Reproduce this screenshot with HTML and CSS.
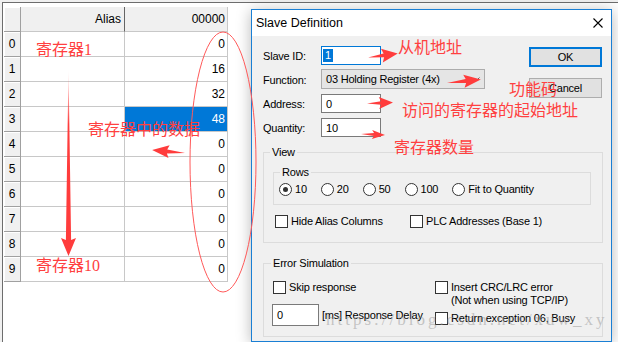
FILE: index.html
```html
<!DOCTYPE html>
<html lang="en">
<head>
    <meta charset="UTF-8">
    <meta name="viewport" content="width=device-width, initial-scale=1.0">
    <title>Modbus Slave - Slave Definition</title>
    <link rel="stylesheet" href="styles.css">
</head>
<body>
    <div class="screen">
        <div class="grid-frame">
            <div class="sheet">
                <div class="corner"></div>
                <div class="col-head alias-head">Alias</div>
                <div class="col-head">00000</div>

                <div class="row-head">0</div><div class="cell"></div><div class="cell value">0</div>
                <div class="row-head">1</div><div class="cell"></div><div class="cell value">16</div>
                <div class="row-head">2</div><div class="cell"></div><div class="cell value">32</div>
                <div class="row-head">3</div><div class="cell"></div><div class="cell value active">48</div>
                <div class="row-head">4</div><div class="cell"></div><div class="cell value">0</div>
                <div class="row-head">5</div><div class="cell"></div><div class="cell value">0</div>
                <div class="row-head">6</div><div class="cell"></div><div class="cell value">0</div>
                <div class="row-head">7</div><div class="cell"></div><div class="cell value">0</div>
                <div class="row-head">8</div><div class="cell"></div><div class="cell value">0</div>
                <div class="row-head">9</div><div class="cell"></div><div class="cell value">0</div>
            </div>
        </div>

        <div class="dialog">
            <div class="titlebar">
                <span>Slave Definition</span>
                <svg class="close" width="10" height="10" viewBox="0 0 10 10">
                    <path d="M0.5 0.5 L9.5 9.5 M9.5 0.5 L0.5 9.5" stroke="#000" stroke-width="1.1" fill="none"/>
                </svg>
            </div>
            <div class="dlg-body">
                <div class="top">
                    <div class="fields">
                        <label>Slave ID:</label>
                        <div class="input focus"><span class="sel-text">1</span></div>
                        <label>Function:</label>
                        <div class="select">
                            <span>03 Holding Register (4x)</span>
                            <svg width="9" height="5" viewBox="0 0 9 5"><path d="M0.5 0.5 L4.5 4.5 L8.5 0.5" stroke="#606060" fill="none"/></svg>
                        </div>
                        <label>Address:</label>
                        <div class="input">0</div>
                        <label>Quantity:</label>
                        <div class="input">10</div>
                    </div>
                    <div class="buttons">
                        <div class="btn default">OK</div>
                        <div class="btn">Cancel</div>
                    </div>
                </div>

                <fieldset class="group view">
                    <legend>View</legend>
                    <fieldset class="group rows">
                        <legend>Rows</legend>
                        <div class="radios">
                            <div class="opt"><span class="radio on"></span>10</div>
                            <div class="opt"><span class="radio"></span>20</div>
                            <div class="opt"><span class="radio"></span>50</div>
                            <div class="opt"><span class="radio"></span>100</div>
                            <div class="opt"><span class="radio"></span>Fit to Quantity</div>
                        </div>
                    </fieldset>
                    <div class="checks">
                        <div class="opt"><span class="box"></span>Hide Alias Columns</div>
                        <div class="opt"><span class="box"></span>PLC Addresses (Base 1)</div>
                    </div>
                </fieldset>

                <fieldset class="group errors">
                    <legend>Error Simulation</legend>
                    <div class="err-grid">
                        <div>
                            <div class="opt"><span class="box"></span>Skip response</div>
                            <div class="delay">
                                <div class="input delay-input">0</div>
                                <span>[ms] Response Delay</span>
                            </div>
                        </div>
                        <div>
                            <div class="opt top-align"><span class="box"></span><span>Insert CRC/LRC error<br>(Not when using TCP/IP)</span></div>
                            <div class="opt busy"><span class="box"></span>Return exception 06, Busy</div>
                        </div>
                    </div>
                </fieldset>
            </div>
        </div>

        <svg class="notes" width="618" height="342" viewBox="0 0 618 342">
            <defs>
                <linearGradient id="fade" x1="0" y1="0" x2="1" y2="0">
                    <stop offset="0" stop-color="#ff3c3c" stop-opacity="0"/>
                    <stop offset="0.3" stop-color="#ff3c3c" stop-opacity="1"/>
                </linearGradient>
            </defs>
            <ellipse cx="223" cy="162" rx="33" ry="130" fill="none" stroke="#ff5a5a" stroke-width="1"/>

            <polygon fill="url(#fade)" transform="translate(68.5,68) rotate(90)" points="0,0 172,-2.6 170,-7.5 188,0 170,7.5 172,2.6"/>
            <polygon class="arrow" transform="translate(185,153) rotate(185)" points="0,0 18,-2 16,-6.5 33,0 16,6.5 18,2"/>
            <polygon class="arrow" transform="translate(368,57.5) rotate(-7.6)" points="0,0 16,-2 14,-7 30,0 14,7 16,2"/>
            <polygon class="arrow" transform="translate(447,83) rotate(-6)" points="0,0 19,-2 17,-6.5 34,0 17,6.5 19,2"/>
            <polygon class="arrow" transform="translate(367,103.5) rotate(-2)" points="0,0 14,-1.8 12,-6 26,0 12,6 14,1.8"/>
            <polygon class="arrow" transform="translate(361,134) rotate(2.4)" points="0,0 13,-1.5 11,-4.5 24,0 11,4.5 13,1.5"/>

            <text class="note" x="36" y="55">寄存器1</text>
            <text class="note" x="36" y="271">寄存器10</text>
            <text class="note" x="88" y="135">寄存器中的数据</text>
            <text class="note" x="398" y="53">从机地址</text>
            <text class="note" x="509" y="95">功能码</text>
            <text class="note" x="402" y="116">访问的寄存器的起始地址</text>
            <text class="note" x="394" y="153">寄存器数量</text>

            <text class="mark" x="326" y="325">https://blog.csdn.net/xuw_xy</text>
        </svg>
    </div>
</body>
</html>
```

FILE: styles.css
```css
* {
    box-sizing: border-box;
}
body {
    margin: 0;
    width: 618px;
    height: 342px;
    overflow: hidden;
    background: #f0f0f0;
    font-family: "Liberation Sans", Arial, sans-serif;
    color: #000;
}
.screen {
    position: relative;
    width: 618px;
    height: 342px;
    padding: 2px 0 0 2px;
}
.grid-frame {
    height: 100%;
    background: #fff;
    border-top: 1px solid #6d6d6d;
    border-left: 1px solid #6d6d6d;
    padding: 4px 0 0 1px;
}

/* register table */
.sheet {
    display: grid;
    grid-template-columns: 17px 104px 103px;
    grid-auto-rows: 25px;
    width: 224px;
    font-size: 12px;
}
.sheet > div {
    display: flex;
    align-items: center;
    border-right: 1px solid #c8c8c8;
    border-bottom: 1px solid #c8c8c8;
}
.corner,
.row-head {
    background: #f0f0f0;
    box-shadow: inset 1px 1px #fff;
}
.sheet > .row-head,
.sheet > .corner {
    border-color: #a0a0a0;
    justify-content: center;
}
.col-head {
    background: #f0f0f0;
    justify-content: flex-end;
    padding-right: 2px;
}
.sheet > .alias-head {
    border-right-color: #646464;
    padding-right: 3px;
}
.value {
    justify-content: flex-end;
    padding-right: 2px;
}
.value.active {
    background: #0078d7;
    color: #fff;
}

/* dialog window */
.dialog {
    position: absolute;
    left: 251px;
    top: 9px;
    width: 361px;
    height: 333px;
    border: 1px solid #1a7fd4;
    background: #f0f0f0;
    box-shadow: 0 2px 14px rgba(0, 0, 0, 0.28);
    display: flex;
    flex-direction: column;
    font-size: 11px;
    letter-spacing: -0.2px;
}
.titlebar {
    height: 26px;
    background: #fff;
    display: flex;
    align-items: center;
    justify-content: space-between;
    padding: 0 8px 1px 4px;
    font-size: 12.5px;
    letter-spacing: 0;
}
.dlg-body {
    flex: 1;
    padding: 10px 8px 0 11px;
}
.top {
    display: flex;
    justify-content: space-between;
    align-items: flex-start;
}
.fields {
    display: grid;
    grid-template-columns: 58px auto;
    grid-auto-rows: 19px;
    row-gap: 5px;
    align-items: center;
}
.input {
    width: 60px;
    height: 19px;
    background: #fff;
    border: 1px solid #7a7a7a;
    padding-left: 4px;
    display: flex;
    align-items: center;
}
.input.focus {
    border-color: #0078d7;
    padding-left: 1px;
}
.sel-text {
    background: #0078d7;
    color: #fff;
    padding: 0 2px;
    line-height: 13px;
}
.select {
    width: 164px;
    height: 20px;
    margin-top: -1px;
    background: #e5e5e5;
    border: 1px solid #acacac;
    padding: 0 4px 0 4px;
    display: flex;
    align-items: center;
    justify-content: space-between;
}
.buttons {
    display: flex;
    flex-direction: column;
    gap: 11px;
    margin: 1px 1px 0 0;
}
.btn {
    width: 73px;
    height: 20px;
    background: #e1e1e1;
    border: 1px solid #adadad;
    display: flex;
    align-items: center;
    justify-content: center;
}
.btn.default {
    border: 2px solid #0078d7;
}

/* group boxes */
.group {
    margin: 0;
    min-width: 0;
    border: 1px solid #dcdcdc;
}
.group legend {
    padding: 0 2px;
    line-height: 14px;
}
.view {
    margin-top: 8px;
    padding: 6px 11px 14px 9px;
}
.view > legend {
    margin-left: -3px;
}
.rows {
    padding: 4px 0 8px 5px;
}
.rows > legend {
    margin-left: 1px;
}
.radios {
    display: flex;
    gap: 14px;
}
.opt {
    display: flex;
    align-items: center;
    gap: 3px;
    line-height: 13px;
}
.radio {
    width: 13px;
    height: 13px;
    border-radius: 50%;
    border: 1px solid #333;
    background: #fff;
    display: flex;
    align-items: center;
    justify-content: center;
}
.radio.on::after {
    content: "";
    width: 5px;
    height: 5px;
    border-radius: 50%;
    background: #333;
}
.box {
    flex: none;
    width: 13px;
    height: 13px;
    border: 1px solid #333;
    background: #fff;
}
.checks {
    display: grid;
    grid-template-columns: 135px auto;
    margin-top: 10px;
    padding-left: 2px;
}
.errors {
    margin-top: 13px;
    padding: 11px 8px 10px 9px;
}
.errors > legend {
    margin-left: -2px;
}
.err-grid {
    display: grid;
    grid-template-columns: 162px auto;
}
.delay {
    display: flex;
    align-items: center;
    gap: 3px;
    margin: 10px 0 0 -1px;
}
.delay-input {
    width: 47px;
    height: 22px;
}
.top-align {
    align-items: flex-start;
}
.busy {
    margin-top: 5px;
}

/* red annotations over the screenshot */
.notes {
    position: absolute;
    left: 0;
    top: 0;
    pointer-events: none;
}
.arrow {
    fill: #ff3c3c;
}
.note {
    font-family: "Liberation Serif", "Noto Sans CJK SC", serif;
    font-size: 16px;
    fill: #ff4040;
}
.mark {
    font-family: "Liberation Serif", serif;
    font-size: 17px;
    letter-spacing: 3px;
    fill: rgba(150, 150, 150, 0.5);
}
```
